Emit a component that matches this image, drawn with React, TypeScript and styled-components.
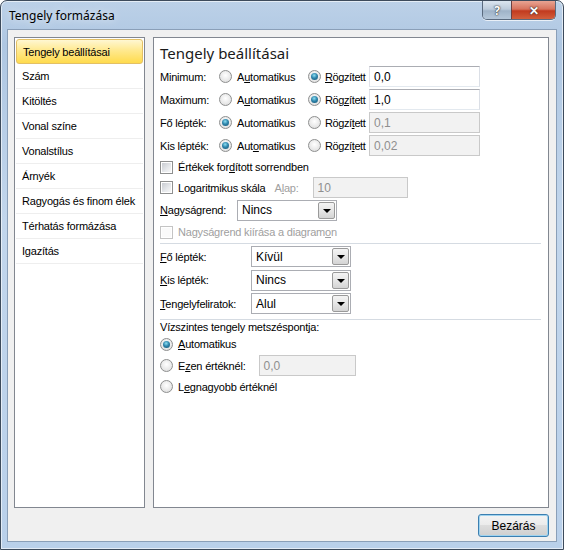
import React from "react";
import { styled, createGlobalStyle } from "styled-components";

const GlobalStyle = createGlobalStyle`
  html, body {
    margin: 0;
    padding: 0;
    background: #ffffff;
  }
  * {
    box-sizing: border-box;
  }
`;

const UI_FONT = `"Liberation Sans", Arial, sans-serif`;
const TITLE_FONT = `"Noto Sans", "Open Sans", sans-serif`;

const Window = styled.div`
  width: 564px;
  height: 550px;
  display: flex;
  flex-direction: column;
  padding: 0 6px 7px 6px;
  border: 1px solid #3d4b5c;
  border-radius: 7px 7px 0 0;
  background: linear-gradient(
    180deg,
    #bcd1e8 0%,
    #afc7e2 8%,
    #c2d6ec 40%,
    #b9d0ea 100%
  );
  box-shadow: inset 0 0 0 1px rgba(255, 255, 255, 0.6);
  font-family: ${UI_FONT};
  font-size: 11px;
  letter-spacing: -0.2px;
  color: #000;
`;

const TitleBar = styled.div`
  height: 29px;
  display: flex;
  align-items: flex-start;
`;

const Title = styled.div`
  flex: 1;
  padding: 7px 0 0 2px;
  font-family: ${TITLE_FONT};
  font-size: 12px;
  line-height: 16px;
  letter-spacing: 0;
  color: #000;
  text-shadow: 0 0 8px rgba(255, 255, 255, 0.9);
`;

const CaptionButtons = styled.div`
  display: flex;
  margin-right: 1px;
  border: 1px solid #5a6a7e;
  border-top: none;
  border-radius: 0 0 5px 5px;
  overflow: hidden;
  box-shadow: 0 1px 0 rgba(255, 255, 255, 0.7);
`;

const CaptionButton = styled.div<{ $close?: boolean }>`
  width: ${(p) => (p.$close ? 44 : 28)}px;
  height: 18px;
  display: flex;
  align-items: center;
  justify-content: center;
  font-family: ${TITLE_FONT};
  font-weight: bold;
  font-size: 12px;
  color: #fff;
  border-left: ${(p) => (p.$close ? "1px solid #6d4040" : "none")};
  background: ${(p) =>
    p.$close
      ? "linear-gradient(180deg, #e8a493 0%, #d7735d 45%, #c23a1f 55%, #d25f3c 100%)"
      : "linear-gradient(180deg, #dbe5ef 0%, #bccbdb 45%, #9fb3c8 55%, #b6c8da 100%)"};
  text-shadow: 0 0 2px #333, 0 0 1px #222;
`;

const Client = styled.div`
  flex: 1;
  display: flex;
  flex-direction: column;
  background: #f0f0f0;
  border: 1px solid #8a9fb8;
  padding: 7px 7px 4px 6px;
`;

const Panels = styled.div`
  display: flex;
  gap: 8px;
  height: 471px;
`;

const Sidebar = styled.div`
  width: 131px;
  background: #fff;
  border: 1px solid #828790;
  padding: 0 1px;
`;

const NavItem = styled.div<{ $active?: boolean }>`
  height: 25px;
  display: flex;
  align-items: center;
  padding-left: 6px;
  font-size: 11px;
  border-bottom: 1px solid ${(p) => (p.$active ? "#e3c065" : "#eeeeee")};
  ${(p) =>
    p.$active &&
    `
    margin-top: 1px;
    border: 1px solid #e3c065;
    border-radius: 3px;
    background: linear-gradient(180deg, #fff7d2 0%, #ffe98f 45%, #ffdb4d 100%);
  `}
`;

const Content = styled.div`
  flex: 1;
  background: #fff;
  border: 1px solid #828790;
  padding: 5px 7px 0 6px;
  display: flex;
  flex-direction: column;
`;

const Heading = styled.div`
  font-family: ${TITLE_FONT};
  font-size: 15px;
  line-height: 21px;
  letter-spacing: 0;
  color: #1a1a1a;
  margin-bottom: 1px;
`;

const AxisRow = styled.div`
  display: grid;
  grid-template-columns: 59px 89px 61px 111px;
  align-items: center;
  height: 23px;
`;

const Option = styled.label<{ $disabled?: boolean; $tight?: boolean }>`
  display: flex;
  align-items: center;
  gap: ${(p) => (p.$tight ? 4 : 5)}px;
  white-space: nowrap;
  letter-spacing: ${(p) => (p.$tight ? "-0.4px" : "inherit")};
  color: ${(p) => (p.$disabled ? "#a0a0a0" : "#000")};
`;

const Radio = styled.span<{ $checked?: boolean }>`
  width: 13px;
  height: 13px;
  flex: none;
  border-radius: 50%;
  border: 1px solid #8e8f8f;
  background: radial-gradient(circle at 50% 40%, #ffffff 0%, #e4e4e4 70%, #d0d0d0 100%);
  display: flex;
  align-items: center;
  justify-content: center;
  &::after {
    content: "";
    display: ${(p) => (p.$checked ? "block" : "none")};
    width: 7px;
    height: 7px;
    border-radius: 50%;
    background: radial-gradient(circle at 45% 35%, #8ee0f2 0%, #2f86ad 45%, #15526f 100%);
  }
`;

const Check = styled.span<{ $disabled?: boolean }>`
  width: 13px;
  height: 13px;
  flex: none;
  border: 1px solid ${(p) => (p.$disabled ? "#c4c4c4" : "#8e8f8f")};
  background: #fff;
  padding: 1px;
  &::after {
    content: "";
    display: block;
    width: 100%;
    height: 100%;
    background: ${(p) =>
      p.$disabled
        ? "#fafafa"
        : "linear-gradient(135deg, #c9ccd2 0%, #e7e9ec 60%, #f7f7f7 100%)"};
  }
`;

const TextBox = styled.div<{ $disabled?: boolean; $width?: number; $offset?: number }>`
  width: ${(p) => p.$width ?? 111}px;
  height: 21px;
  margin-left: ${(p) => p.$offset ?? 0}px;
  display: flex;
  align-items: center;
  padding-left: 4px;
  font-size: 12px;
  letter-spacing: 0;
  border: 1px solid;
  border-color: ${(p) =>
    p.$disabled ? "#c9c9c9" : "#abadb3 #dbdfe6 #e3e9ef #e2e3ea"};
  background: ${(p) => (p.$disabled ? "#f2f2f2" : "#fff")};
  color: ${(p) => (p.$disabled ? "#8f8f8f" : "#000")};
`;

const CheckRow = styled.div<{ $height?: number }>`
  display: flex;
  align-items: center;
  height: ${(p) => p.$height ?? 21}px;
  gap: 5px;
`;

const AlapLabel = styled.span`
  margin-left: 4px;
  margin-right: 9px;
  color: #a0a0a0;
`;

const Select = styled.div<{ $width?: number }>`
  width: ${(p) => p.$width ?? 100}px;
  height: 21px;
  display: flex;
  align-items: center;
  justify-content: space-between;
  border: 1px solid #abadb3;
  background: #fff;
  padding: 1px 1px 1px 4px;
  font-size: 12px;
  letter-spacing: 0;
`;

const DropButton = styled.span`
  width: 17px;
  height: 17px;
  border: 1px solid #9a9a9a;
  border-radius: 2px;
  background: linear-gradient(180deg, #f4f4f4 0%, #e6e6e6 50%, #d4d4d4 100%);
  display: flex;
  align-items: center;
  justify-content: center;
  &::after {
    content: "";
    border-left: 4px solid transparent;
    border-right: 4px solid transparent;
    border-top: 4px solid #000;
    margin-top: 1px;
  }
`;

const NagysagRow = styled.div`
  display: grid;
  grid-template-columns: 77px 100px;
  align-items: center;
  height: 24px;
`;

const Separator = styled.div<{ $before: number; $after: number }>`
  height: 1px;
  background: #d5dbe2;
  margin: ${(p) => p.$before}px 0 ${(p) => p.$after}px;
`;

const TickRow = styled.div`
  display: grid;
  grid-template-columns: 91px 100px;
  align-items: center;
  height: 23.5px;
`;

const SectionLabel = styled.div`
  height: 14px;
  display: flex;
  align-items: center;
`;

const RadioRow = styled.div<{ $height: number }>`
  display: flex;
  align-items: center;
  height: ${(p) => p.$height}px;
  gap: 5px;
`;

const Footer = styled.div`
  display: flex;
  justify-content: flex-end;
  padding-top: 6px;
`;

const Button = styled.div`
  width: 71px;
  height: 23px;
  display: flex;
  align-items: center;
  justify-content: center;
  border: 1px solid #3c7fb1;
  border-radius: 3px;
  font-size: 12px;
  letter-spacing: 0;
  background: linear-gradient(180deg, #f4f4f4 0%, #ebebeb 49%, #dddddd 50%, #cfcfcf 100%);
  box-shadow: inset 0 0 0 1px #9fd3ef;
`;

const U = styled.span`
  text-decoration: underline;
`;

const navItems = [
  "Tengely beállításai",
  "Szám",
  "Kitöltés",
  "Vonal színe",
  "Vonalstílus",
  "Árnyék",
  "Ragyogás és finom élek",
  "Térhatás formázása",
  "Igazítás",
];

type Acc = [string, string, string];

interface AxisValue {
  label: string;
  auto: Acc;
  fixed: Acc;
  isAuto: boolean;
  value: string;
}

const axisValues: AxisValue[] = [
  { label: "Minimum:", auto: ["A", "u", "tomatikus"], fixed: ["", "R", "ögzített"], isAuto: false, value: "0,0" },
  { label: "Maximum:", auto: ["A", "u", "tomatikus"], fixed: ["Rög", "z", "ített"], isAuto: false, value: "1,0" },
  { label: "Fő lépték:", auto: ["Automatikus", "", ""], fixed: ["Rögzí", "t", "ett"], isAuto: true, value: "0,1" },
  { label: "Kis lépték:", auto: ["Aut", "o", "matikus"], fixed: ["Rögzí", "t", "ett"], isAuto: true, value: "0,02" },
];

const Accel = ({ parts }: { parts: Acc }) => (
  <span>
    {parts[0]}
    {parts[1] && <U>{parts[1]}</U>}
    {parts[2]}
  </span>
);

const tickRows = [
  { key: "F", post: "ő lépték:", value: "Kívül" },
  { key: "K", post: "is lépték:", value: "Nincs" },
  { key: "T", post: "engelyfeliratok:", value: "Alul" },
];

export default function App() {
  return (
    <>
      <GlobalStyle />
      <Window>
        <TitleBar>
          <Title>Tengely formázása</Title>
          <CaptionButtons>
            <CaptionButton>?</CaptionButton>
            <CaptionButton $close>✕</CaptionButton>
          </CaptionButtons>
        </TitleBar>
        <Client>
          <Panels>
            <Sidebar>
              {navItems.map((item, i) => (
                <NavItem key={item} $active={i === 0}>
                  {item}
                </NavItem>
              ))}
            </Sidebar>
            <Content>
              <Heading>Tengely beállításai</Heading>
              {axisValues.map((row) => (
                <AxisRow key={row.label}>
                  <span>{row.label}</span>
                  <Option>
                    <Radio $checked={row.isAuto} />
                    <Accel parts={row.auto} />
                  </Option>
                  <Option $tight>
                    <Radio $checked={!row.isAuto} />
                    <Accel parts={row.fixed} />
                  </Option>
                  <TextBox $disabled={row.isAuto}>{row.value}</TextBox>
                </AxisRow>
              ))}
              <CheckRow $height={20}>
                <Check />
                <span>
                  Értékek for<U>d</U>ított sorrendben
                </span>
              </CheckRow>
              <CheckRow>
                <Check />
                <span>
                  Lo<U>g</U>aritmikus skála
                </span>
                <AlapLabel>
                  A<U>l</U>ap:
                </AlapLabel>
                <TextBox $disabled $width={95}>
                  10
                </TextBox>
              </CheckRow>
              <NagysagRow>
                <span>
                  <U>N</U>agyságrend:
                </span>
                <Select>
                  Nincs
                  <DropButton />
                </Select>
              </NagysagRow>
              <CheckRow $height={20}>
                <Check $disabled />
                <Option $disabled>
                  <span>
                    Nagyságrend kiírása a diagram<U>o</U>n
                  </span>
                </Option>
              </CheckRow>
              <Separator $before={1} $after={1} />
              {tickRows.map((row) => (
                <TickRow key={row.post}>
                  <span>
                    <U>{row.key}</U>
                    {row.post}
                  </span>
                  <Select>
                    {row.value}
                    <DropButton />
                  </Select>
                </TickRow>
              ))}
              <Separator $before={3} $after={0} />
              <SectionLabel>Vízszintes tengely metszéspontja:</SectionLabel>
              <RadioRow $height={21}>
                <Radio $checked />
                <span>
                  <U>A</U>utomatikus
                </span>
              </RadioRow>
              <RadioRow $height={22}>
                <Option>
                  <Radio />
                  <span>
                    E<U>z</U>en értéknél:
                  </span>
                </Option>
                <TextBox $disabled $width={97} $offset={8}>
                  0,0
                </TextBox>
              </RadioRow>
              <RadioRow $height={20}>
                <Radio />
                <span>
                  L<U>e</U>gnagyobb értéknél
                </span>
              </RadioRow>
            </Content>
          </Panels>
          <Footer>
            <Button>Bezárás</Button>
          </Footer>
        </Client>
      </Window>
    </>
  );
}
